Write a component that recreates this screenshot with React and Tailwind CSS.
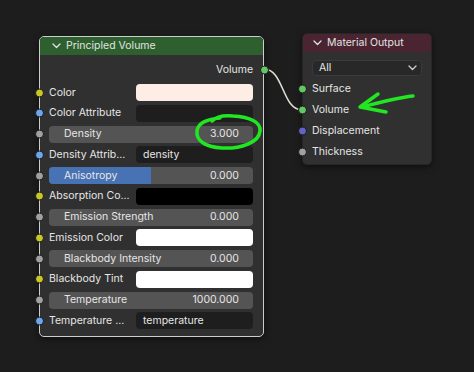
import React from 'react';

const SOCK = {
  green: 'bg-[#63c763]',
  yellow: 'bg-[#c7c729]',
  grey: 'bg-[#a1a1a1]',
  blue: 'bg-[#6aa8ee]',
  purple: 'bg-[#6363c7]',
};

const Socket = ({ color, side = 'left' }) => (
  <span
    className={`absolute top-1/2 -translate-y-1/2 w-[9px] h-[9px] rounded-full border border-[#1b1b1b] ${SOCK[color]} ${
      side === 'left' ? 'left-[-14.5px]' : 'right-[-15.5px]'
    }`}
  />
);

const Chevron = ({ className = '' }) => (
  <svg width="9" height="6" viewBox="0 0 9 6" className={className}>
    <path d="M1 1 L4.5 4.5 L8 1" fill="none" stroke="currentColor" strokeWidth="1.3" strokeLinecap="round" strokeLinejoin="round" />
  </svg>
);

const FieldRow = ({ sock, label, field, text }) => (
  <div className="relative flex items-center h-[17px]">
    <Socket color={sock} />
    <span className="w-[87px] shrink-0 whitespace-nowrap overflow-hidden">{label}</span>
    <div className={`flex-1 h-[17px] rounded-[4px] flex items-center pl-[7px] ${field}`}>
      {text}
    </div>
  </div>
);

const SliderRow = ({ sock, label, value, fill }) => (
  <div className="relative flex items-center h-[17px]">
    <Socket color={sock} />
    <div className="relative flex-1 h-[17px] rounded-[4px] bg-[#545454] overflow-hidden flex items-center justify-between pl-[15px] pr-[14px]">
      {fill && <div className="absolute left-0 top-0 bottom-0 w-1/2 bg-[#4772b3]" />}
      <span className="relative">{label}</span>
      <span className="relative">{value}</span>
    </div>
  </div>
);

export default function App() {
  return (
    <div
      className="relative w-[474px] h-[372px] overflow-hidden bg-[#1d1d1d] text-[10.5px] text-[#e6e6e6]"
      style={{ fontFamily: 'Inter, "Noto Sans", sans-serif' }}
    >
      {/* wire */}
      <svg className="absolute inset-0" width="474" height="372">
        <path d="M264 69 C 284 69, 282 110, 302 110" fill="none" stroke="#dcdcd0" strokeWidth="1.6" />
      </svg>

      {/* Principled Volume */}
      <div className="absolute left-[39px] top-[36px] w-[225px] rounded-[5px] border border-[#cdcdcd] bg-[#303030] shadow-[0_2px_6px_rgba(0,0,0,0.5)]">
        <div className="h-[18px] rounded-t-[4px] bg-[#2e5f2e] flex items-center pl-[12px] gap-[5px] text-[#e2e2e2]">
          <Chevron />
          <span>Principled Volume</span>
        </div>
        <div className="flex flex-col pl-[9px] pr-[10px] pb-[7px]">
          <div className="relative flex items-center justify-end h-[17px] mt-[6px]">
            <span>Volume</span>
            <Socket color="green" side="right" />
          </div>
          <div className="flex flex-col gap-[3.75px] mt-[6px]">
            <FieldRow sock="yellow" label="Color" field="bg-[#fdede5]" />
            <FieldRow sock="blue" label="Color Attribute" field="bg-[#1e1e1e]" />
            <SliderRow sock="grey" label="Density" value="3.000" />
            <FieldRow sock="blue" label="Density Attrib..." field="bg-[#1e1e1e]" text="density" />
            <SliderRow sock="grey" label="Anisotropy" value="0.000" fill />
            <FieldRow sock="yellow" label="Absorption Co..." field="bg-[#000000]" />
            <SliderRow sock="grey" label="Emission Strength" value="0.000" />
            <FieldRow sock="yellow" label="Emission Color" field="bg-[#ffffff]" />
            <SliderRow sock="grey" label="Blackbody Intensity" value="0.000" />
            <FieldRow sock="yellow" label="Blackbody Tint" field="bg-[#ffffff]" />
            <SliderRow sock="grey" label="Temperature" value="1000.000" />
            <FieldRow sock="blue" label="Temperature ..." field="bg-[#1e1e1e]" text="temperature" />
          </div>
        </div>
      </div>

      {/* Material Output */}
      <div className="absolute left-[302px] top-[33px] w-[130px] rounded-[5px] border border-[#262626] bg-[#303030] shadow-[0_2px_6px_rgba(0,0,0,0.5)]">
        <div className="h-[18px] rounded-t-[4px] bg-[#4a2431] flex items-center pl-[10px] gap-[5px] text-[#e2e2e2]">
          <Chevron />
          <span>Material Output</span>
        </div>
        <div className="flex flex-col pl-[9px] pr-[9px] pb-[3.5px]">
          <div className="mt-[8px] h-[16px] rounded-[4px] bg-[#282828] border border-[#3a3a3a] flex items-center justify-between pl-[6px] pr-[4px]">
            <span>All</span>
            <Chevron className="text-[#cfcfcf]" />
          </div>
          <div className="flex flex-col gap-[4px] mt-[4.5px]">
            {[
              ['green', 'Surface'],
              ['green', 'Volume'],
              ['purple', 'Displacement'],
              ['grey', 'Thickness'],
            ].map(([c, l]) => (
              <div key={l} className="relative flex items-center h-[17px]">
                <Socket color={c} />
                <span>{l}</span>
              </div>
            ))}
          </div>
        </div>
      </div>

      {/* green annotations */}
      <svg className="absolute inset-0 pointer-events-none" width="474" height="372">
        <g fill="none" stroke="#22e622" strokeWidth="3.5" strokeLinecap="round" strokeLinejoin="round">
          <path d="M212 121 C 216 117, 224 115, 233 116 C 250 117, 261 122, 260 131 C 259 143, 240 149, 222 148 C 204 147, 196 140, 197 131 C 198 123, 208 119, 220 118" />
          <path d="M413 96 C 396 98, 377 103, 362 107" />
          <path d="M378 94 L 360 107 L 386 112" />
        </g>
      </svg>
    </div>
  );
}
